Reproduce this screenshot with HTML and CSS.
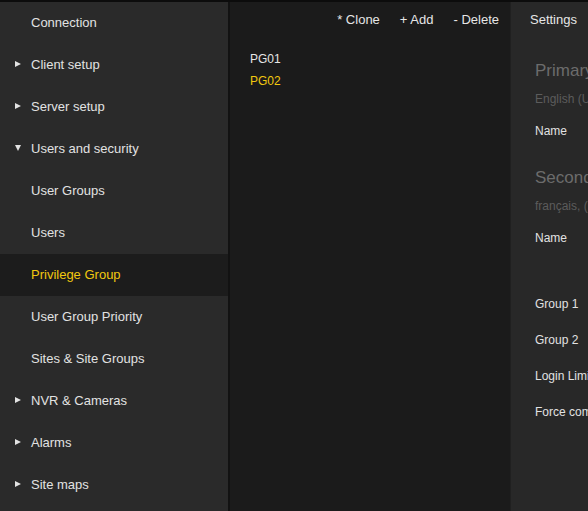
FILE: index.html
```html
<!DOCTYPE html>
<html>
<head>
<meta charset="utf-8">
<link rel="stylesheet" href="styles.css">
</head>
<body>
<div class="app">
  <nav class="sidebar">
    <div class="item"><span class="arrow"></span><span>Connection</span></div>
    <div class="item"><span class="arrow"><svg width="6" height="6" viewBox="0 0 6 6"><polygon points="0,0 6,3 0,6" /></svg></span><span>Client setup</span></div>
    <div class="item"><span class="arrow"><svg width="6" height="6" viewBox="0 0 6 6"><polygon points="0,0 6,3 0,6" /></svg></span><span>Server setup</span></div>
    <div class="item"><span class="arrow"><svg width="6" height="6" viewBox="0 0 6 6"><polygon points="0,0 6,0 3,6" /></svg></span><span>Users and security</span></div>
    <div class="item"><span class="arrow"></span><span>User Groups</span></div>
    <div class="item"><span class="arrow"></span><span>Users</span></div>
    <div class="item active"><span class="arrow"></span><span>Privilege Group</span></div>
    <div class="item"><span class="arrow"></span><span>User Group Priority</span></div>
    <div class="item"><span class="arrow"></span><span>Sites &amp; Site Groups</span></div>
    <div class="item"><span class="arrow"><svg width="6" height="6" viewBox="0 0 6 6"><polygon points="0,0 6,3 0,6" /></svg></span><span>NVR &amp; Cameras</span></div>
    <div class="item"><span class="arrow"><svg width="6" height="6" viewBox="0 0 6 6"><polygon points="0,0 6,3 0,6" /></svg></span><span>Alarms</span></div>
    <div class="item"><span class="arrow"><svg width="6" height="6" viewBox="0 0 6 6"><polygon points="0,0 6,3 0,6" /></svg></span><span>Site maps</span></div>
  </nav>
  <section class="middle">
    <div class="toolbar">
      <span class="tool">* Clone</span>
      <span class="tool">+ Add</span>
      <span class="tool">- Delete</span>
    </div>
    <ul class="list">
      <li>PG01</li>
      <li class="selected">PG02</li>
    </ul>
  </section>
  <section class="settings">
    <div class="settings-head">Settings</div>
    <div class="body">
      <div class="sec-title first">Primary language</div>
      <div class="sec-sub">English (United States)</div>
      <div class="row name">Name</div>
      <div class="sec-title">Secondary language</div>
      <div class="sec-sub">français, (France)</div>
      <div class="row name">Name</div>
      <div class="rows">
        <div class="row">Group 1</div>
        <div class="row">Group 2</div>
        <div class="row">Login Limit</div>
        <div class="row">Force complex password</div>
      </div>
    </div>
  </section>
</div>
</body>
</html>
```
FILE: styles.css
```css
* { box-sizing: border-box; }
html, body { margin: 0; padding: 0; }
body {
  background: #0c0c0c;
  font-family: "Liberation Sans", Arial, sans-serif;
  width: 588px;
  height: 511px;
  overflow: hidden;
}
.app {
  display: flex;
  height: 511px;
  padding-top: 2px;
  background: #0c0c0c;
}
.sidebar {
  flex: none;
  width: 230px;
  background: #2a2a2a;
  border-right: 2px solid #121212;
}
.item {
  height: 42px;
  display: flex;
  align-items: center;
  padding-left: 15px;
  padding-bottom: 2px;
  font-size: 13px;
  color: #e2e2e2;
}
.item.active {
  background: #1c1c1c;
  color: #f2c80f;
}
.arrow {
  width: 16px;
  flex: none;
  display: flex;
  align-items: center;
}
.arrow svg { display: block; fill: #e2e2e2; }
.middle {
  width: 280px;
  flex: none;
  background: #1b1b1b;
}
.toolbar {
  height: 34px;
  display: flex;
  align-items: center;
  justify-content: flex-end;
  gap: 20px;
  padding-right: 11px;
  font-size: 13px;
  color: #e6e6e6;
}
.list {
  list-style: none;
  margin: 0;
  padding: 12px 0 0 20px;
}
.list li {
  height: 22px;
  line-height: 22px;
  font-size: 12px;
  color: #e6e6e6;
}
.list li.selected { color: #f2c80f; }
.settings {
  flex: 1;
  min-width: 0;
  background: #282828;
  border-left: 1px solid #202020;
  overflow: hidden;
  white-space: nowrap;
}
.settings-head {
  height: 34px;
  display: flex;
  align-items: center;
  padding-left: 19px;
  font-size: 13px;
  color: #e6e6e6;
}
.body { padding-left: 24px; padding-top: 1px; }
.sec-title {
  margin-top: 17px;
  height: 24px;
  line-height: 24px;
  font-size: 17px;
  color: #6c6c6c;
}
.sec-title.first { margin-top: 22px; }
.sec-sub {
  margin-top: 8px;
  height: 16px;
  line-height: 16px;
  font-size: 12px;
  color: #5c5c5c;
}
.row {
  height: 36px;
  line-height: 36px;
  font-size: 12px;
  color: #e2e2e2;
}
.row.name { margin-top: 6px; }
.rows { margin-top: 30px; }
```
